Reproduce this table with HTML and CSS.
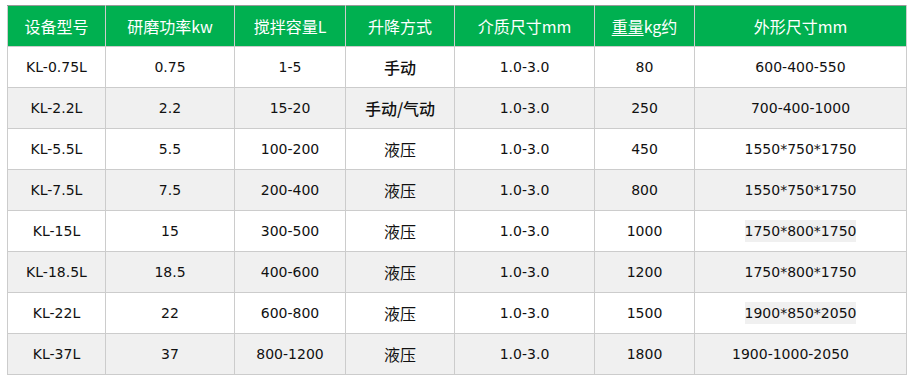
FILE: index.html
```html
<!DOCTYPE html>
<html lang="zh">
<head>
  <meta charset="UTF-8">
  <title>设备参数</title>
  <link rel="stylesheet" href="styles.css">
</head>
<body>

<table class="spec-table">
  <colgroup>
    <col class="c1"><col class="c2"><col class="c3"><col class="c4"><col class="c5"><col class="c6"><col class="c7">
  </colgroup>
  <tr class="head">
    <th>设备型号</th>
    <th>研磨功率kw</th>
    <th>搅拌容量L</th>
    <th>升降方式</th>
    <th>介质尺寸mm</th>
    <th><span class="ul">重量</span>kg约</th>
    <th>外形尺寸mm</th>
  </tr>
  <tr>
    <td>KL-0.75L</td><td>0.75</td><td>1-5</td><td class="cn bold">手动</td><td>1.0-3.0</td><td>80</td><td>600-400-550</td>
  </tr>
  <tr>
    <td>KL-2.2L</td><td>2.2</td><td>15-20</td><td class="cn bold">手动/气动</td><td>1.0-3.0</td><td>250</td><td>700-400-1000</td>
  </tr>
  <tr>
    <td>KL-5.5L</td><td>5.5</td><td>100-200</td><td class="cn">液压</td><td>1.0-3.0</td><td>450</td><td>1550*750*1750</td>
  </tr>
  <tr>
    <td>KL-7.5L</td><td>7.5</td><td>200-400</td><td class="cn">液压</td><td>1.0-3.0</td><td>800</td><td>1550*750*1750</td>
  </tr>
  <tr>
    <td>KL-15L</td><td>15</td><td>300-500</td><td class="cn">液压</td><td>1.0-3.0</td><td>1000</td><td><span class="mark">1750*800*1750</span></td>
  </tr>
  <tr>
    <td>KL-18.5L</td><td>18.5</td><td>400-600</td><td class="cn">液压</td><td>1.0-3.0</td><td>1200</td><td>1750*800*1750</td>
  </tr>
  <tr>
    <td>KL-22L</td><td>22</td><td>600-800</td><td class="cn">液压</td><td>1.0-3.0</td><td>1500</td><td><span class="mark">1900*850*2050</span></td>
  </tr>
  <tr>
    <td>KL-37L</td><td>37</td><td>800-1200</td><td class="cn">液压</td><td>1.0-3.0</td><td>1800</td><td class="shift">1900-1000-2050</td>
  </tr>
</table>

</body>
</html>
```

FILE: styles.css
```css
body {
  margin: 0;
  padding: 5px 0 0 7px;
  font-family: "DejaVu Sans", "Noto Sans CJK SC", sans-serif;
  background-color: #fff;
}

.spec-table {
  border-collapse: collapse;
  table-layout: fixed;
  width: 900px;
  border: 1px solid #999;
}

.c1 { width: 98px; }
.c2 { width: 129px; }
.c3 { width: 111px; }
.c4 { width: 109px; }
.c5 { width: 140px; }
.c6 { width: 100px; }
.c7 { width: 212px; }

.spec-table th,
.spec-table td {
  height: 41px;
  padding: 0;
  text-align: center;
  border: 1px solid #ccc;
  box-sizing: border-box;
}

.spec-table th {
  background-color: #00b050;
  color: #fff;
  font-family: "Noto Sans CJK SC", sans-serif;
  font-weight: normal;
  font-size: 16px;
  border-top: 1px solid #999;
}

.spec-table td {
  color: #111;
  font-size: 14px;
}

.spec-table tr:nth-child(odd) td {
  background-color: #f0f0f0;
}

.spec-table td.cn {
  font-family: "Noto Sans CJK SC", sans-serif;
  font-size: 16px;
}

.spec-table td.bold {
  font-weight: 500;
}

.spec-table td.shift {
  padding-right: 20px;
}

.ul {
  text-decoration: underline;
  text-underline-offset: 2px;
}

.mark {
  background-color: #f0f0f0;
  padding: 3px 0;
}
```
